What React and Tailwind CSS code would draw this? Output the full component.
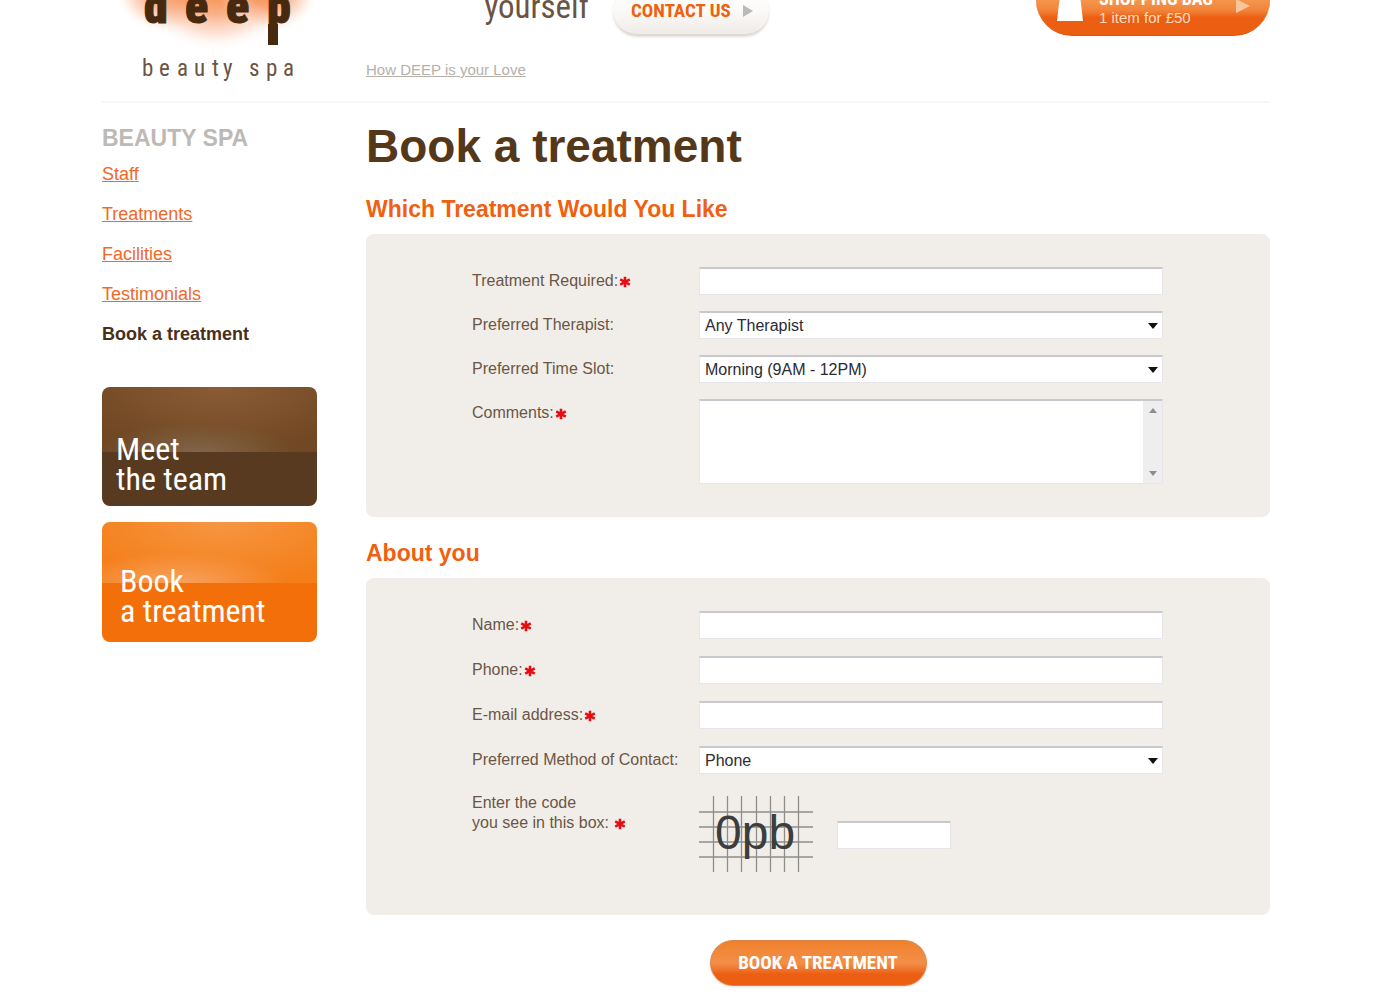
import { useState } from 'react'

const NAV_LINKS = ['Staff', 'Treatments', 'Facilities', 'Testimonials']

const CONDENSED = "font-['Roboto_Condensed',Roboto,sans-serif]"

const FIELD =
  'block w-full border border-[#e6e5ea] border-t-2 border-t-[#c9c8ce] bg-white text-[16px] text-[#2b2b33] outline-none'

function Required() {
  return (
    <svg viewBox="0 0 12 12" className="ml-px inline-block h-3 w-3" aria-label="required" role="img">
      <path d="M6 0.8V11.2M1.2 3.4L10.8 8.6M10.8 3.4L1.2 8.6" stroke="#e60d12" strokeWidth="2.6" fill="none" />
    </svg>
  )
}

function Logo() {
  return (
    <svg viewBox="0 0 215 101" className="h-[101px] w-full" role="img" aria-label="deep beauty spa">
      <defs>
        <radialGradient id="glow">
          <stop offset="0" stopColor="#f4731c" stopOpacity="0.85" />
          <stop offset="0.4" stopColor="#f6884a" stopOpacity="0.65" />
          <stop offset="0.7" stopColor="#fbb795" stopOpacity="0.4" />
          <stop offset="1" stopColor="#ffffff" stopOpacity="0" />
        </radialGradient>
      </defs>
      <ellipse cx="62" cy="-10" rx="50" ry="44" fill="url(#glow)" />
      <ellipse cx="114" cy="-10" rx="80" ry="62" fill="url(#glow)" />
      <ellipse cx="168" cy="-10" rx="50" ry="44" fill="url(#glow)" />
      <text
        x="42 83 124 165"
        y="23"
        fontSize="48"
        fontWeight="900"
        fill="#47290f"
        stroke="#47290f"
        strokeWidth="1"
        className={CONDENSED}
      >
        deep
      </text>
      <rect x="166" y="24" width="10" height="21" fill="#47290f" />
      <text
        x="40 57 75 92 110 121 138 147 164 181"
        y="76"
        fontSize="23"
        fill="#6b5443"
        className={CONDENSED}
      >
        beauty spa
      </text>
    </svg>
  )
}

function Header() {
  return (
    <header className="flex h-[103px] items-end gap-[49px] overflow-hidden border-b-2 border-[#f7f7f7]">
      <div className="w-[215px] shrink-0">
        <Logo />
      </div>
      <div className="flex-1 pb-[21px]">
        <div className="flex items-end">
          <p className={`w-[223px] pb-[11px] text-right text-[33px] leading-[36px] text-[#6b5443] ${CONDENSED}`}>
            yourself
          </p>
          <a
            href="#contact"
            className={`ml-6 flex h-12 w-[156px] items-center justify-between rounded-full border-b-2 border-[#dedad5] bg-gradient-to-b from-white via-[#fbfaf9] to-[#efebe7] pr-4 pl-[18px] text-[19px] font-bold whitespace-nowrap text-[#f0600f] shadow-sm ${CONDENSED}`}
          >
            CONTACT US
            <svg viewBox="0 0 10 12" className="h-3 w-[10px]" fill="#bdb9b5" aria-hidden="true">
              <path d="M0 0L10 6L0 12Z" />
            </svg>
          </a>
          <a
            href="#bag"
            className="ml-auto flex h-[72px] w-[234px] items-end rounded-full border-b border-[#d9560c] bg-gradient-to-b from-[#f7a25a] from-40% via-[#f2843a] via-65% to-[#ec5f12] to-75% pr-5 pb-2 pl-[21px] text-white"
          >
            <svg viewBox="0 0 26 40" className="mb-[6px] h-10 w-[26px]" aria-hidden="true">
              <path d="M3 14H23L26 40H0Z" fill="#fff" />
              <path d="M8 18V8a5 5 0 0 1 10 0V18" fill="none" stroke="#fff" strokeWidth="2" />
            </svg>
            <span className="ml-4 flex-1">
              <span className={`block text-[18px] leading-5 font-bold whitespace-nowrap ${CONDENSED}`}>
                SHOPPING BAG
              </span>
              <span className="block text-[15px] leading-[18px] text-[#ffdcc2]">1 item for £50</span>
            </span>
            <svg viewBox="0 0 14 14" className="mb-[14px] h-[14px] w-[14px]" fill="#fbc59b" aria-hidden="true">
              <path d="M0 0L14 7L0 14Z" />
            </svg>
          </a>
        </div>
        <a href="#love" className="mt-6 block w-fit text-[15px] leading-5 text-[#b5b0aa] underline">
          How DEEP is your Love
        </a>
      </div>
    </header>
  )
}

function Sidebar() {
  return (
    <aside className="w-[215px] shrink-0 pt-[21px]">
      <h2 className="text-[23px] leading-7 font-bold text-[#bdb9b5]">BEAUTY SPA</h2>
      <nav className="mt-3 text-[18px] leading-5 text-[#f0682a]">
        <ul className="space-y-5">
          {NAV_LINKS.map((label) => (
            <li key={label}>
              <a href={`#${label.toLowerCase()}`} className="underline">
                {label}
              </a>
            </li>
          ))}
          <li className="font-bold text-[#47301c]">Book a treatment</li>
        </ul>
      </nav>
      <div className={`mt-[43px] space-y-4 text-[32px] leading-[30px] text-white ${CONDENSED}`}>
        <a
          href="#team"
          className="flex h-[119px] items-end rounded-lg bg-[radial-gradient(45%_45%_at_45%_100%,#81654a_0%,transparent_100%),radial-gradient(70%_100%_at_55%_0%,#8b5c36_0%,#704823_100%)] bg-[length:100%_55%] bg-no-repeat bg-[#573a1f] px-[14px] pb-3"
        >
          <span>
            Meet
            <br />
            the team
          </span>
        </a>
        <a
          href="#book"
          className="flex h-[120px] items-end rounded-lg bg-[radial-gradient(50%_50%_at_35%_100%,#f8a260_0%,transparent_100%),radial-gradient(70%_100%_at_55%_0%,#f69642_0%,#f47f1a_100%)] bg-[length:100%_51%] bg-no-repeat bg-[#f26f09] px-[18px] pb-4"
        >
          <span>
            Book
            <br />a treatment
          </span>
        </a>
      </div>
    </aside>
  )
}

function Row({ id, label, required, children }) {
  return (
    <div className="flex items-start">
      <label htmlFor={id} className="w-[227px] shrink-0 leading-7 whitespace-nowrap">
        {label}
        {required ? <Required /> : null}
      </label>
      <div className="min-w-0 flex-1">{children}</div>
    </div>
  )
}

function TextField({ id, label, type = 'text' }) {
  return (
    <Row id={id} label={label} required>
      <input id={id} type={type} className={`${FIELD} h-7 px-1`} />
    </Row>
  )
}

function SelectField({ id, label, options }) {
  const [value, setValue] = useState(options[0])

  return (
    <Row id={id} label={label}>
      <div className="relative">
        <select
          id={id}
          value={value}
          onChange={(e) => setValue(e.target.value)}
          className={`${FIELD} h-7 appearance-none px-[5px]`}
        >
          {options.map((option) => (
            <option key={option}>{option}</option>
          ))}
        </select>
        <svg
          viewBox="0 0 10 6"
          className="pointer-events-none absolute top-3 right-[5px] h-[6px] w-[10px]"
          fill="#111"
          aria-hidden="true"
        >
          <path d="M0 0H10L5 6Z" />
        </svg>
      </div>
    </Row>
  )
}

function Comments() {
  return (
    <Row id="comments" label="Comments:" required>
      <div className="relative">
        <textarea id="comments" className={`${FIELD} h-[85px] resize-none py-1 pr-6 pl-1`} />
        <div className="pointer-events-none absolute top-[2px] right-px bottom-px flex w-[19px] flex-col items-center justify-between bg-[#eeeeef] py-[7px]">
          <svg viewBox="0 0 8 5" className="h-[5px] w-2" fill="#8d8d92" aria-hidden="true">
            <path d="M0 5H8L4 0Z" />
          </svg>
          <svg viewBox="0 0 8 5" className="h-[5px] w-2" fill="#8d8d92" aria-hidden="true">
            <path d="M0 0H8L4 5Z" />
          </svg>
        </div>
      </div>
    </Row>
  )
}

function Captcha() {
  return (
    <div className="flex items-start pt-[5px]">
      <label htmlFor="code" className="-mt-[3px] w-[227px] shrink-0 leading-5">
        Enter the code
        <br />
        you see in this box: <Required />
      </label>
      <svg viewBox="0 0 114 76" className="h-[76px] w-[114px] shrink-0" role="img" aria-label="Security code">
        <path
          d="M14.5 0V76M28.5 0V76M42.5 0V76M57.5 0V76M71.5 0V76M85.5 0V76M99.5 0V76M0 16H114M0 31H114M0 46H114M0 61H114"
          stroke="#8f8d8a"
          strokeWidth="1.3"
        />
        <text x="16" y="53" fontSize="48" fill="#3d3d3d">
          0pb
        </text>
      </svg>
      <input id="code" type="text" className={`${FIELD} mt-[25px] ml-6 h-7 max-w-[114px] px-1`} />
    </div>
  )
}

function Section({ title, children }) {
  return (
    <section>
      <h2 className="mb-[11px] text-[23px] leading-7 font-bold text-[#f0600f]">{title}</h2>
      {children}
    </section>
  )
}

export default function App() {
  return (
    <div className="min-h-screen bg-white pr-[130px] pl-[102px] font-['Liberation_Sans',Arial,sans-serif]">
      <Header />
      <div className="flex items-start gap-[49px]">
        <Sidebar />
        <main className="min-w-0 flex-1 pt-[19px] pb-3">
          <h1 className="mb-[25px] text-[46px] leading-[48px] font-bold text-[#553819]">Book a treatment</h1>
          <form className="text-[16px] text-[#6b5645]" onSubmit={(e) => e.preventDefault()}>
            <div className="space-y-[22px]">
              <Section title="Which Treatment Would You Like">
                <div className="space-y-4 rounded-lg bg-[#f1eeea] pt-[33px] pr-[107px] pb-[33px] pl-[106px]">
                  <TextField id="treatment" label="Treatment Required:" />
                  <SelectField id="therapist" label="Preferred Therapist:" options={['Any Therapist']} />
                  <SelectField
                    id="slot"
                    label="Preferred Time Slot:"
                    options={['Morning (9AM - 12PM)', 'Afternoon (12PM - 5PM)']}
                  />
                  <Comments />
                </div>
              </Section>
              <Section title="About you">
                <div className="space-y-[17px] rounded-lg bg-[#f1eeea] pt-[33px] pr-[107px] pb-[43px] pl-[106px]">
                  <TextField id="name" label="Name:" />
                  <TextField id="phone" label="Phone:" type="tel" />
                  <TextField id="email" label="E-mail address:" type="email" />
                  <SelectField id="method" label="Preferred Method of Contact:" options={['Phone', 'E-mail']} />
                  <Captcha />
                </div>
              </Section>
            </div>
            <button
              type="submit"
              className={`mx-auto mt-[25px] block h-[46px] w-[217px] rounded-full border border-[#dc8348] bg-gradient-to-b from-[#f0812b] via-[#f28f48] via-50% to-[#ec5f12] to-75% text-[19px] font-bold whitespace-nowrap text-white shadow ${CONDENSED}`}
            >
              BOOK A TREATMENT
            </button>
          </form>
        </main>
      </div>
    </div>
  )
}
